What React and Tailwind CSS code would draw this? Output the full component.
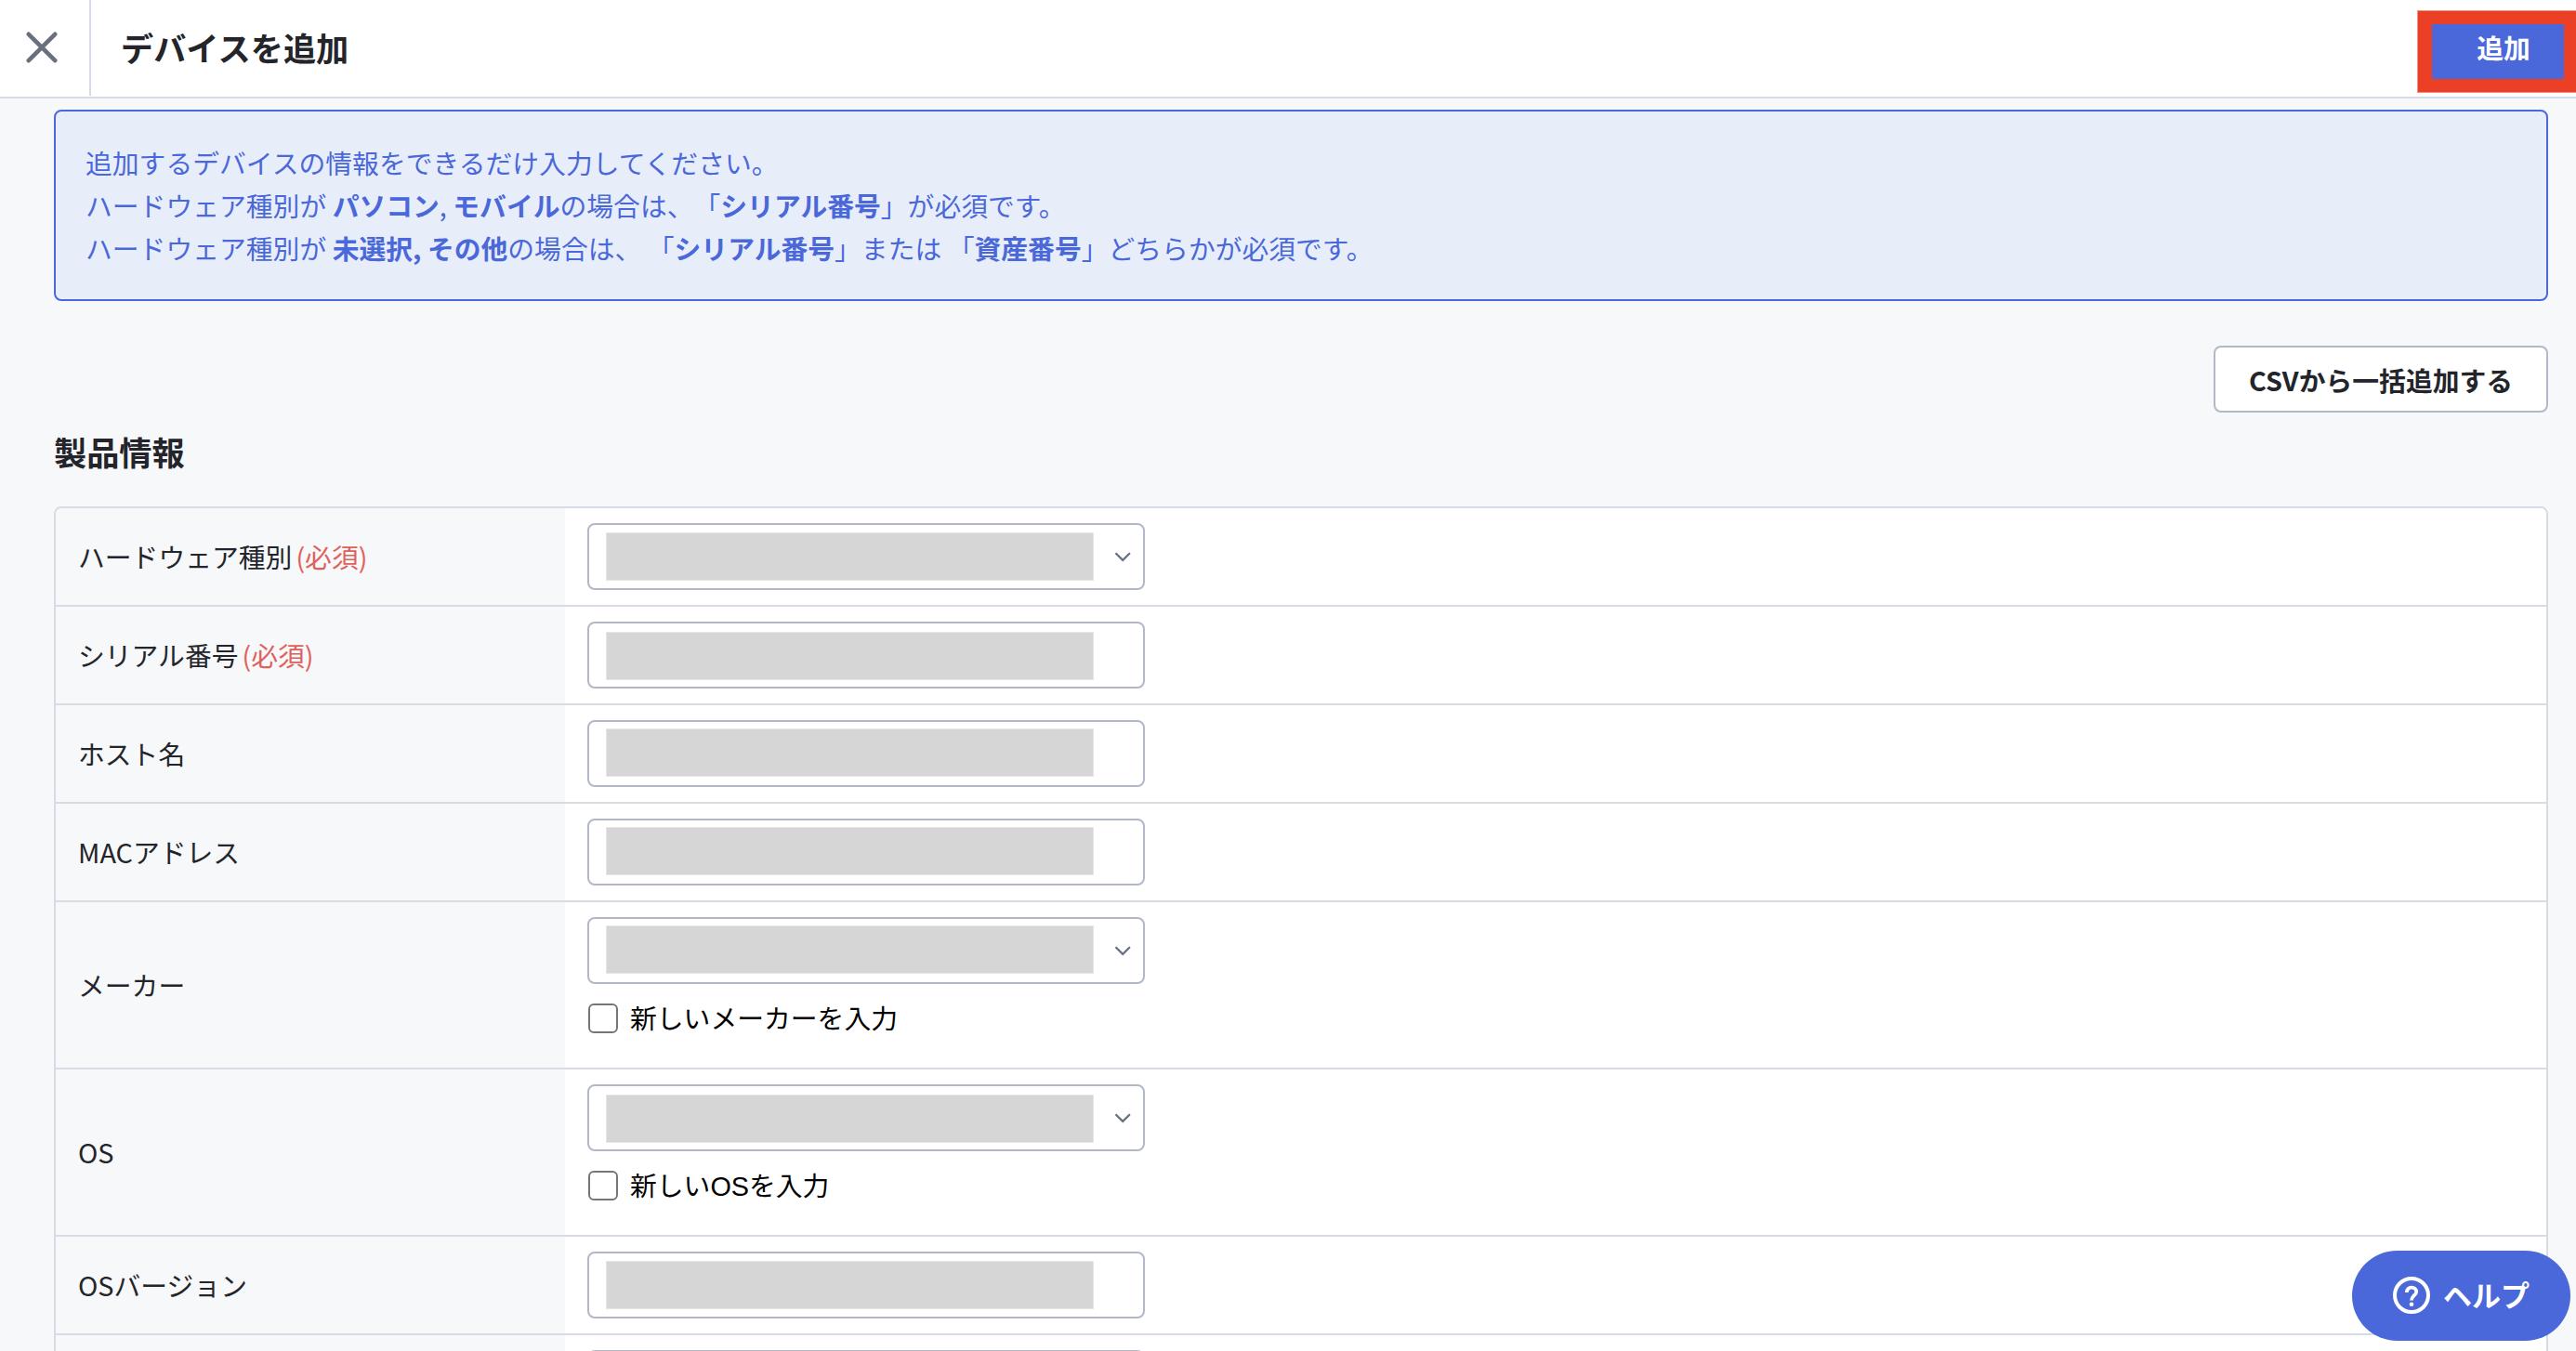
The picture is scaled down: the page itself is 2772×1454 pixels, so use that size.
import React from 'react';

const FIELDS = [
  { label: 'ハードウェア種別', required: true, type: 'select', maskClass: 'mt-[8px]' },
  { label: 'シリアル番号', required: true, type: 'text', maskClass: 'mt-[9px]' },
  { label: 'ホスト名', type: 'text', maskClass: 'mt-[7px]' },
  { label: 'MACアドレス', type: 'text', maskClass: 'mt-[7px]' },
  { label: 'メーカー', type: 'select', maskClass: 'mt-[7px]', checkbox: '新しいメーカーを入力' },
  { label: 'OS', type: 'select', maskClass: 'mt-[9px]', checkbox: '新しいOSを入力' },
  { label: 'OSバージョン', type: 'text', maskClass: 'mt-[8px]' },
  { label: '', type: 'text', maskClass: 'mt-[8px]' },
];

function CloseIcon() {
  return (
    <svg width="34" height="34" viewBox="0 0 34 34" fill="none">
      <path d="M2.8 2.8L31.2 31.2M31.2 2.8L2.8 31.2" stroke="#687080" strokeWidth="4.6" strokeLinecap="round" />
    </svg>
  );
}

function ChevronIcon() {
  return (
    <svg width="18" height="12" viewBox="0 0 18 12" fill="none">
      <path d="M1.5 2.2L9.2 9.9L16.9 2.2" stroke="#687080" strokeWidth="2.2" />
    </svg>
  );
}

function HelpIcon() {
  return (
    <svg width="40" height="40" viewBox="0 0 40 40" fill="none">
      <circle cx="20" cy="20" r="18" stroke="white" strokeWidth="4" />
      <path
        d="M14.8 17C14.8 13.8 17 11.6 20 11.6C23 11.6 25.2 13.5 25.2 16.2C25.2 20 20 20.6 20 25.6"
        stroke="white"
        strokeWidth="3.8"
      />
      <circle cx="20" cy="29.8" r="2.3" fill="white" />
    </svg>
  );
}

function Field({ type, maskClass }) {
  return (
    <div className="flex h-[72px] w-[600px] items-start rounded-lg border-2 border-[#b3b8c8] bg-white pl-[18px]">
      <div className={`h-[52px] w-[525px] shrink-0 border border-[#e6e6e6] bg-[#d6d6d6] ${maskClass}`} />
      {type === 'select' && (
        <div className="ml-[22px] flex h-full items-center">
          <ChevronIcon />
        </div>
      )}
    </div>
  );
}

function Row({ field }) {
  return (
    <div className="flex border-b-2 border-[#d7dbe5]">
      <div className="flex w-[548px] items-center bg-[#f7f8fa] pl-6">
        <span>{field.label}</span>
        {field.required && <span className="ml-1 text-[#e0605b]">(必須)</span>}
      </div>
      <div className="flex-1 bg-white px-6 py-4">
        <Field type={field.type} maskClass={field.maskClass} />
        {field.checkbox && (
          <label className="flex h-[74px] items-center gap-[13px] pl-px font-['Liberation_Sans','Noto_Sans_CJK_JP',sans-serif] text-black">
            <span className="size-8 rounded-md border-2 border-[#767676] bg-white" />
            <span className="pt-0.5">{field.checkbox}</span>
          </label>
        )}
      </div>
    </div>
  );
}

export default function App() {
  return (
    <div className="relative h-[1454px] w-[2772px] overflow-hidden bg-[#f7f8fa] font-['Noto_Sans_CJK_JP',sans-serif] text-[28.8px] leading-[1.6] text-[#23252b]">
      <header className="flex h-[106px] border-b-2 border-[#d7dbe5] bg-white">
        <div className="flex h-[103px] w-[98px] items-center border-r-2 border-[#d7dbe5] pb-px pl-7">
          <CloseIcon />
        </div>
        <h1 className="flex h-[102px] flex-1 items-center pl-8 text-[35.2px] font-bold">デバイスを追加</h1>
        <div className="mt-[11px] h-[89px] w-[171px] border-y border-l border-[#f3917f] bg-[#eb4026] pt-[14px] pl-[15px]">
          <button className="flex h-[59px] w-[142px] items-center justify-center bg-[#4a68da] pb-2 pl-3 font-bold text-white">
            追加
          </button>
        </div>
      </header>

      <main className="pt-3 pr-[30px] pl-[58px]">
        <div className="h-[206px] rounded-lg border-2 border-[#4a68da] bg-[#e8eef9] p-8 text-[#4a68da] [text-spacing-trim:space-all]">
          <p>追加するデバイスの情報をできるだけ入力してください。</p>
          <p>
            ハードウェア種別が <b>パソコン</b>, <b>モバイル</b>の場合は、「<b>シリアル番号</b>」が必須です。
          </p>
          <p>
            ハードウェア種別が <b>未選択, その他</b>の場合は、 「<b>シリアル番号</b>」または 「<b>資産番号</b>
            」どちらかが必須です。
          </p>
        </div>

        <div className="mt-12 flex justify-end">
          <button className="flex h-[72px] w-[360px] items-center justify-center rounded-lg border-2 border-[#b3b8c8] bg-white pt-0.5 font-bold">
            CSVから一括追加する
          </button>
        </div>

        <h2 className="mt-[14px] text-[35.2px] leading-[56px] font-bold">製品情報</h2>

        <div className="mt-[31px] overflow-hidden rounded-lg border-2 border-[#d7dbe5]">
          {FIELDS.map((field, i) => (
            <Row key={i} field={field} />
          ))}
        </div>
      </main>

      {/* floating help button */}
      <button className="absolute right-[6px] bottom-[11px] flex h-[97px] w-[235px] items-center rounded-full bg-[#4a68da] pb-px pl-11 text-[31px] font-bold text-white">
        <HelpIcon />
        <span className="ml-[14px] pb-[3px]">ヘルプ</span>
      </button>
    </div>
  );
}
